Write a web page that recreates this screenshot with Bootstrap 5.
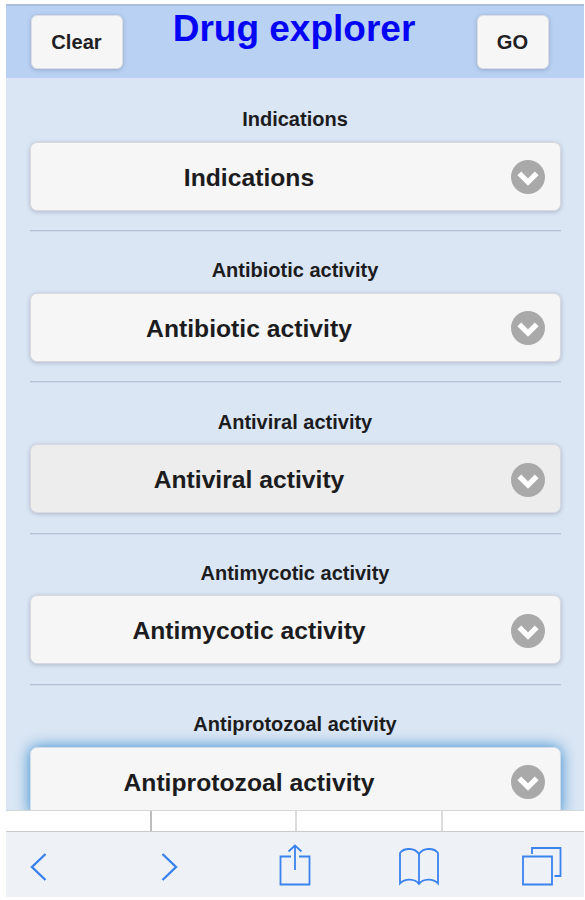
<!DOCTYPE html>
<html lang="en">
<head>
<meta charset="utf-8">
<meta name="viewport" content="width=device-width, initial-scale=1">
<title>Drug explorer</title>
<link href="https://cdn.jsdelivr.net/npm/bootstrap@5.3.0/dist/css/bootstrap.min.css" rel="stylesheet">
<style>
body{font-family:"Liberation Sans",Arial,sans-serif;background:#fff;color:#1c1c1e;height:900px;padding:4px 1.5px 3px 5.5px}
.topbar{height:74px;background:#b9d1f3;border-top:2px solid #a9bbdf;padding:9px 35px 0 25px}
.topbar .btn{height:54px;font-size:20.1px;font-weight:700;color:#1f2023;background:#f6f6f6;border:1px solid #dcdfe6;border-radius:6px;box-shadow:0 1px 4px rgba(60,70,110,.3)}
.btn-clear{width:92px}
.btn-go{width:72px}
.title{font-size:37px;line-height:40px;color:#0505f5;margin:-6px 0 0 -11px}
.content{height:732px;background:#dae6f4;padding:29.3px 23px 0 24px}
.group{height:151.2px}
.caption{font-size:20px;line-height:24px;font-weight:700;margin-bottom:10.5px}
.picker{height:69px;font-size:24.7px;font-weight:700;color:#1c1c1e;background:#f6f6f6;border:1px solid #d8d9e0;border-radius:7px;box-shadow:0 1px 4px rgba(60,60,90,.28);padding:2px 15px 0 0}
.picker.pressed{background:#ededed}
.picker.focused{border-color:#cfdded;box-shadow:0 0 15px #3388cc}
.picker span{padding-left:5px}
.rule{border-top:1px solid #b5c2d5;border-bottom:1px solid #cfdbea;margin:19.5px 0 0}
.tabs{height:20.5px;border-top:1px solid #d4d6d8}
.tabs div{flex:0 0 145.3px;border-right:2px solid #dcdcdc}
.tabs div:first-child{flex-basis:146.5px;border-right-color:#bdbdc0}
.tabs div:last-child{border:0}
.toolbar{height:66.5px;background:#eef2f7;border-top:1.5px solid #c9cacc;padding:3px 0 0 12px;grid-template-columns:130px 126px 124px 123px 42px}
.toolbar svg{fill:none;stroke:#3a82ee;stroke-width:1.8}
</style>
<script src="https://cdn.jsdelivr.net/npm/bootstrap@5.3.0/dist/js/bootstrap.bundle.min.js"></script>
</head>
<body class="m-0 overflow-hidden d-flex flex-column">
<svg class="d-none"><symbol id="chevron" viewBox="0 0 34 34"><circle cx="17" cy="17" r="17" fill="#a9a9a9"/><path d="M8.300 13.300 17 22l8.700-8.700" fill="none" stroke="#fff" stroke-width="5.300"/></symbol></svg>
<header class="topbar d-flex justify-content-between align-items-start flex-shrink-0">
  <button class="btn btn-clear p-0">Clear</button>
  <h1 class="title fw-bold">Drug explorer</h1>
  <button class="btn btn-go p-0">GO</button>
</header>
<main class="content overflow-hidden flex-shrink-0">
  <section class="group"><div class="caption text-center">Indications</div>
    <button class="picker w-100 d-flex align-items-center"><span class="flex-fill me-5">Indications</span><svg width="34" height="34"><use href="#chevron"/></svg></button><div class="rule"></div></section>
  <section class="group"><div class="caption text-center">Antibiotic activity</div>
    <button class="picker w-100 d-flex align-items-center"><span class="flex-fill me-5">Antibiotic activity</span><svg width="34" height="34"><use href="#chevron"/></svg></button><div class="rule"></div></section>
  <section class="group"><div class="caption text-center">Antiviral activity</div>
    <button class="picker pressed w-100 d-flex align-items-center"><span class="flex-fill me-5">Antiviral activity</span><svg width="34" height="34"><use href="#chevron"/></svg></button><div class="rule"></div></section>
  <section class="group"><div class="caption text-center">Antimycotic activity</div>
    <button class="picker w-100 d-flex align-items-center"><span class="flex-fill me-5">Antimycotic activity</span><svg width="34" height="34"><use href="#chevron"/></svg></button><div class="rule"></div></section>
  <section class="group"><div class="caption text-center">Antiprotozoal activity</div>
    <button class="picker focused w-100 d-flex align-items-center"><span class="flex-fill me-5">Antiprotozoal activity</span><svg width="34" height="34"><use href="#chevron"/></svg></button></section>
</main>
<div class="tabs d-flex flex-shrink-0"><div></div><div></div><div></div><div></div></div>
<footer class="toolbar d-grid align-items-center flex-shrink-0">
  <svg width="42" height="44" viewBox="-10 0 42 44"><path d="M17.500 10 4 23l13.500 13" stroke-width="2.400"/></svg>
  <svg width="42" height="44" viewBox="-10 0 42 44"><path d="M4.500 10 18 23 4.500 36" stroke-width="2.400"/></svg>
  <svg width="42" height="44" viewBox="-4 0 42 44"><path d="M13 12.500H2.500v28h29v-28H21M17 26V2M10.500 7.500 17 1.500l6.500 6"/></svg>
  <svg width="42" height="44" viewBox="0 0 42 44"><path d="M21 10C17 3.500 6 3.500 2 9v30.500C7 34 17 34.500 21 40c4-5.500 14-6 19-.5V9C36 3.500 25 3.500 21 10v30"/></svg>
  <svg width="42" height="44" viewBox="0 0 42 44"><path d="M2 12.500h29v28H2zM11 10V4h28.500v28H33.500"/></svg>
</footer>
</body>
</html>
